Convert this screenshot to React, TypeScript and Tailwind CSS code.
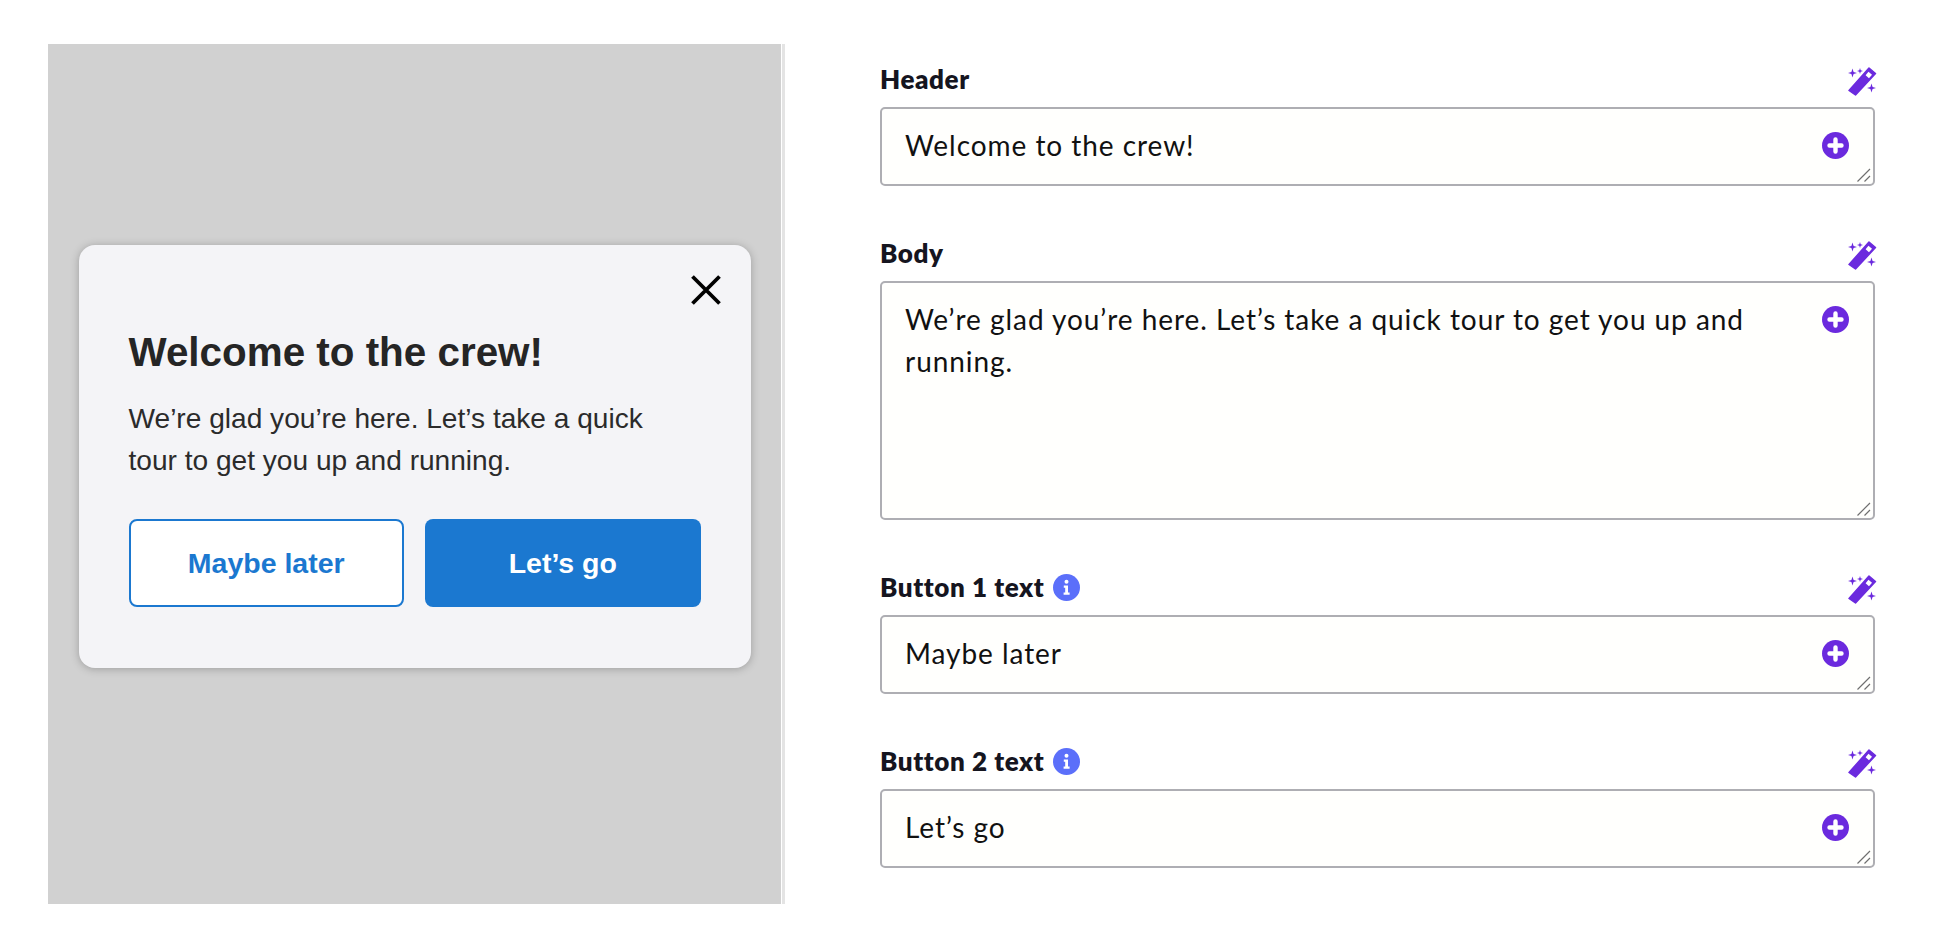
function WandIcon() {
  return (
    <svg viewBox="0 0 29 29" className="w-[29px] h-[29px] block shrink-0 mt-[10px] -mr-[2px]" fill="#6b2ade">
      <path d="M21 1 27.5 6.5 7.5 28 1 23.5Z" stroke="#6b2ade" strokeWidth="1.5" strokeLinejoin="round" />
      <path d="M20.5 4.8 24 7.8 21 11.2 17.6 8.2Z" fill="#fff" />
      <path d="M4.5 1.5 5.6 4.9 9 6 5.6 7.1 4.5 10.5 3.4 7.1 0 6 3.4 4.9Z" />
      <path d="M12 1 12.7 3.3 15 4 12.7 4.7 12 7 11.3 4.7 9 4 11.3 3.3Z" />
      <path d="M23.5 16.5 24.6 19.9 28 21 24.6 22.1 23.5 25.5 22.4 22.1 19 21 22.4 19.9Z" />
    </svg>
  );
}

function AddIcon() {
  return (
    <svg viewBox="0 0 27 27" className="w-[27px] h-[27px] block">
      <circle cx="13.5" cy="13.5" r="13.5" fill="#6b2ade" />
      <path d="M13.5 7.5v12M7.5 13.5h12" stroke="#fff" strokeWidth="4.4" strokeLinecap="round" />
    </svg>
  );
}

function InfoIcon() {
  return (
    <svg viewBox="0 0 27 27" className="w-[27px] h-[27px] block">
      <circle cx="13.5" cy="13.5" r="13.5" fill="#5b6ffa" />
      <circle cx="13.5" cy="7.8" r="2" fill="#fff" />
      <path d="M10.8 11.5h4.2v7h1.6v2.2h-6v-2.2h1.6v-4.8h-1.4Z" fill="#fff" />
    </svg>
  );
}

function ResizeHandle() {
  return (
    <svg viewBox="0 0 14 14" className="absolute right-0.5 bottom-0.5 w-3.5 h-3.5">
      <path d="M0.5 13.5 13 1M7.5 13.5 13 8" stroke="#6f6f6f" strokeWidth="1.2" fill="none" />
    </svg>
  );
}

function Field({ label, value, info, tall }: { label: string; value: string; info?: boolean; tall?: boolean }) {
  return (
    <div>
      <div className="flex items-start justify-between h-[50px]">
        <div className="flex items-center gap-[9px] h-[44px] text-[26px] font-extrabold tracking-[0.6px] text-[#15151f]">
          <span>{label}</span>
          {info && <InfoIcon />}
        </div>
        <WandIcon />
      </div>
      <div className={`relative flex items-start justify-between border-2 border-[#aeaeb3] rounded-[5px] bg-[#fffffd] pl-[23px] pr-[24px] pt-[15px] ${tall ? "h-[239px]" : "h-[79px]"}`}>
        <p className="w-[880px] text-[28px] leading-[42px] tracking-[0.95px] text-[#111]">{value}</p>
        <div className="pt-[8px]"><AddIcon /></div>
        <ResizeHandle />
      </div>
    </div>
  );
}

export default function App() {
  return (
    <div className="w-[1956px] h-[950px] bg-white flex items-start pt-[44px] pl-[48px] font-['Lato',sans-serif] overflow-hidden">
      <div className="w-[733px] h-[860px] bg-[#d1d1d1] flex items-center justify-center shrink-0 pb-[36px]">
        <div className="w-[672px] h-[423px] bg-[#f4f4f7] rounded-[16px] shadow-[0_1px_8px_rgba(0,0,0,0.25)] px-[50px] pt-[30px] font-['Liberation_Sans',sans-serif]">
          <div className="flex justify-end -mr-[20px] h-[30px]">
            <svg viewBox="0 0 30 30" className="w-[30px] h-[30px]">
              <path d="M1.5 1.5 28.5 28.5M28.5 1.5 1.5 28.5" stroke="#000" strokeWidth="3.8" fill="none" />
            </svg>
          </div>
          <h2 className="mt-[24px] text-[40.4px] leading-[46px] font-bold text-[#252525]">Welcome to the crew!</h2>
          <p className="mt-[23px] w-[540px] text-[28.1px] leading-[42px] text-[#2b2b2b]">We’re glad you’re here. Let’s take a quick tour to get you up and running.</p>
          <div className="mt-[37px] flex gap-[21px]">
            <button className="w-[276px] h-[88px] pt-[2px] rounded-[8px] border-2 border-[#1b78d0] bg-white text-[28.5px] font-bold text-[#1b78d0]">Maybe later</button>
            <button className="w-[276px] h-[88px] pt-[2px] rounded-[8px] bg-[#1b78d0] text-[28.5px] font-bold text-white">Let’s go</button>
          </div>
        </div>
      </div>
      <div className="w-[3px] h-[860px] ml-[1px] bg-[#e4e4e4] shrink-0" />
      <div className="ml-[95px] w-[995px] flex flex-col gap-[45px] pt-[13px]">
        <Field label="Header" value="Welcome to the crew!" />
        <Field label="Body" value="We’re glad you’re here. Let’s take a quick tour to get you up and running." tall />
        <Field label="Button 1 text" value="Maybe later" info />
        <Field label="Button 2 text" value="Let’s go" info />
      </div>
    </div>
  );
}
